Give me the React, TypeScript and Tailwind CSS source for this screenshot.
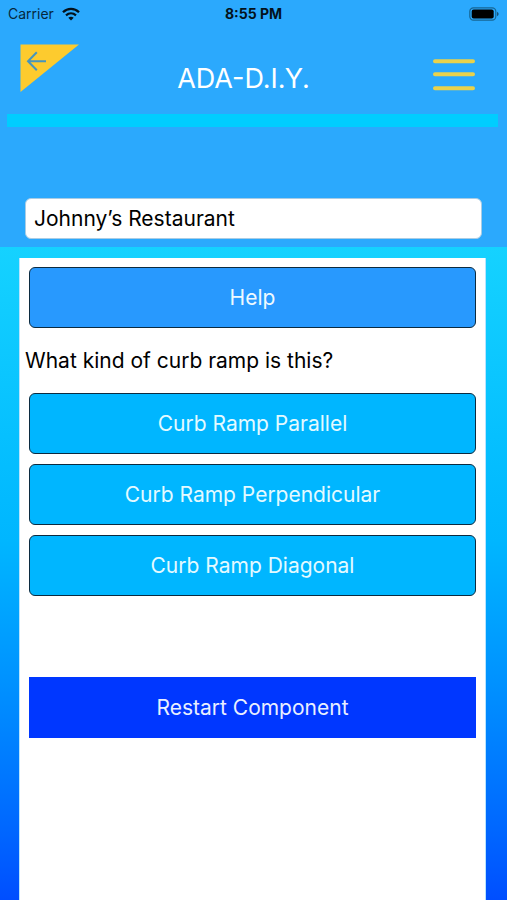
const choices = ['Curb Ramp Parallel', 'Curb Ramp Perpendicular', 'Curb Ramp Diagonal'];

function StatusBar() {
  return (
    <div className="grid h-7 grid-cols-3 items-center px-2 text-sm text-[#06283d]">
      <div className="flex items-center gap-2">
        <span>Carrier</span>
        <svg className="h-[14px] w-[18px]" viewBox="0 0 18 14" fill="none" stroke="#03121c" aria-label="Wi-Fi">
          <path d="M1 5.2C5.6 .7 12.4 .7 17 5.2" strokeWidth="2.3" />
          <path d="M4 8.4C7 5.7 11 5.7 14 8.4" strokeWidth="2.2" />
          <path d="M6.3 10.7C8 9.3 10 9.3 11.7 10.7L9 13.5Z" fill="#03121c" stroke="none" />
        </svg>
      </div>
      <span className="text-center font-bold text-[#03121c]">8:55 PM</span>
      <svg className="h-[14px] w-[30px] justify-self-end" viewBox="0 0 30 14" aria-label="Battery full">
        <rect x=".8" y=".8" width="26" height="12.4" rx="3.6" fill="none" stroke="#176694" strokeWidth="1.2" />
        <rect x="2.7" y="2.6" width="22" height="8.8" rx="2" fill="#000" />
        <path d="M28.2 4.8C30 5.5 30 8.5 28.2 9.2Z" fill="#123f5e" />
      </svg>
    </div>
  );
}

export default function App() {
  return (
    <div className="flex min-h-screen flex-col bg-[#2ba9fd] font-['Inter','Liberation_Sans',sans-serif] text-black">
      <header>
        <StatusBar />
        <div className="grid h-[86px] grid-cols-[80px_1fr_80px] pt-4">
          <button type="button" aria-label="Back" className="ml-5 h-[49px] w-[60px]">
            <svg className="h-[49px] w-[60px]" viewBox="0 0 60 49">
              <path d="M.5 .5H59L.5 48Z" fill="#fdcb2e" />
              <path d="M26 17.3H8M16.8 8.3L8 17.3L16.8 26.3" fill="none" stroke="#4795bd" strokeWidth="2" />
            </svg>
          </button>
          <h1 className="self-start pt-[14px] pr-5 text-center text-[27px] leading-[42px] text-white">
            ADA-D.I.Y.
          </h1>
          <button type="button" aria-label="Menu" className="mt-[14px] ml-[5px] h-[34px] w-[44px]">
            <svg
              className="h-[34px] w-[44px]"
              viewBox="0 0 44 34"
              stroke="#e9d24b"
              strokeWidth="4"
              strokeLinecap="round"
            >
              <path d="M3 3.2H41M3 16.2H41M3 30.2H41" />
            </svg>
          </button>
        </div>
        <div className="mr-[9px] ml-[7px] h-[13px] bg-[#00cdff]" />
        <div className="pt-[71px] pr-[25px] pb-[8px] pl-[25px]">
          <input
            type="text"
            aria-label="Location name"
            defaultValue="Johnny’s Restaurant"
            className="block h-[41px] w-full rounded-md border border-[#a9cce4] bg-white px-2 text-[21px] outline-none"
          />
        </div>
      </header>
      <main className="flex grow flex-col bg-linear-to-b from-[#15d2ff] via-[#00b6ff] via-45% to-[#004eff] pt-[11px] pr-[21px] pl-[19px]">
        <section className="flex grow flex-col border-x border-[#b8e4ff] bg-white px-[9px] pt-[9px] text-[21px]">
          <button
            type="button"
            className="h-[61px] rounded-md border border-[#0c2b40] bg-[#2899fe] text-[#eef9ff]"
          >
            Help
          </button>
          <h2 className="-ml-1 py-4 leading-[33px]">What kind of curb ramp is this?</h2>
          <div className="flex flex-col gap-[10px]">
            {choices.map((choice) => (
              <button
                key={choice}
                type="button"
                className="h-[61px] rounded-md border border-[#0c2b40] bg-[#00b6ff] text-[#e4faff]"
              >
                {choice}
              </button>
            ))}
          </div>
          <button type="button" className="mt-[81px] h-[61px] bg-[#0037ff] text-[#e9efff]">
            Restart Component
          </button>
        </section>
      </main>
    </div>
  );
}
